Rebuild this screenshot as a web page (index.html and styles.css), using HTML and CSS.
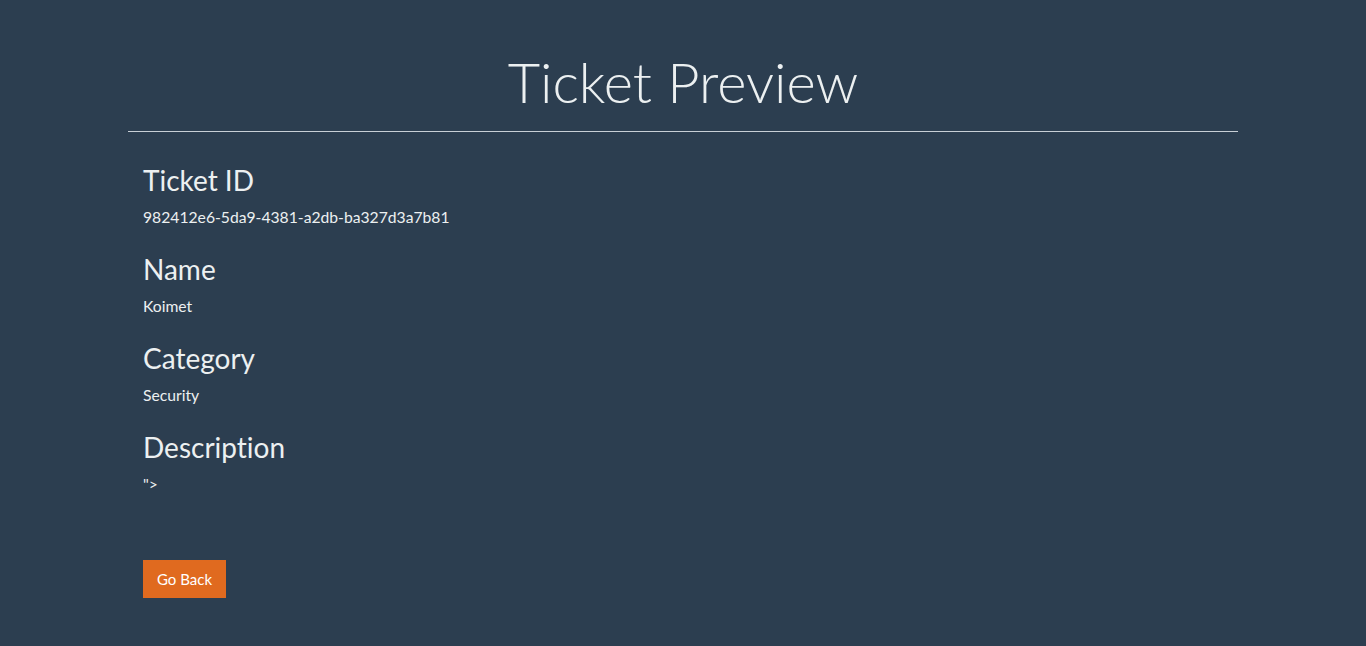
FILE: index.html
```html
<!DOCTYPE html>
<html lang="en">
<head>
<meta charset="utf-8">
<title>Ticket Preview</title>
<link rel="stylesheet" href="styles.css">
</head>
<body>
<main class="container">
  <h1 class="title">Ticket Preview</h1>
  <hr class="divider">
  <section class="details">
    <div class="field">
      <h3 class="field-label">Ticket ID</h3>
      <p class="field-value">982412e6-5da9-4381-a2db-ba327d3a7b81</p>
    </div>
    <div class="field">
      <h3 class="field-label">Name</h3>
      <p class="field-value">Koimet</p>
    </div>
    <div class="field">
      <h3 class="field-label">Category</h3>
      <p class="field-value">Security</p>
    </div>
    <div class="field">
      <h3 class="field-label">Description</h3>
      <p class="field-value">"&gt;</p>
    </div>
    <div class="actions">
      <a class="btn-back" href="#">Go Back</a>
    </div>
  </section>
</main>
</body>
</html>
```
FILE: styles.css
```css
html, body {
  margin: 0;
  padding: 0;
}
body {
  background: #2c3e50;
  color: #ecf0f1;
  font-family: Lato, "Noto Sans", sans-serif;
  font-variant-ligatures: none;
  min-height: 646px;
}
.container {
  width: 1110px;
  margin: 0 auto;
  padding-top: 48px;
}
.title {
  margin: 0;
  font-size: 56px;
  font-weight: 300;
  line-height: 1.2;
  text-align: center;
  color: #ecf0f1;
}
.divider {
  margin: 16px 0 0;
  border: 0;
  border-top: 1px solid #c8cfd6;
  height: 0;
}
.details {
  padding: 32px 15px 0;
  display: flex;
  flex-direction: column;
  gap: 25px;
}
.field {
  display: flex;
  flex-direction: column;
  gap: 8px;
}
.field-label {
  margin: 0;
  font-size: 28px;
  font-weight: 400;
  line-height: 1.2;
}
.field-value {
  margin: 0;
  font-size: 15.7px;
  line-height: 22.5px;
}
.actions {
  margin-top: 39px;
}
.btn-back {
  display: inline-block;
  background: #e06a1f;
  color: #ffffff;
  text-decoration: none;
  font-size: 15px;
  line-height: 22px;
  padding: 8px 14px;
}
```
